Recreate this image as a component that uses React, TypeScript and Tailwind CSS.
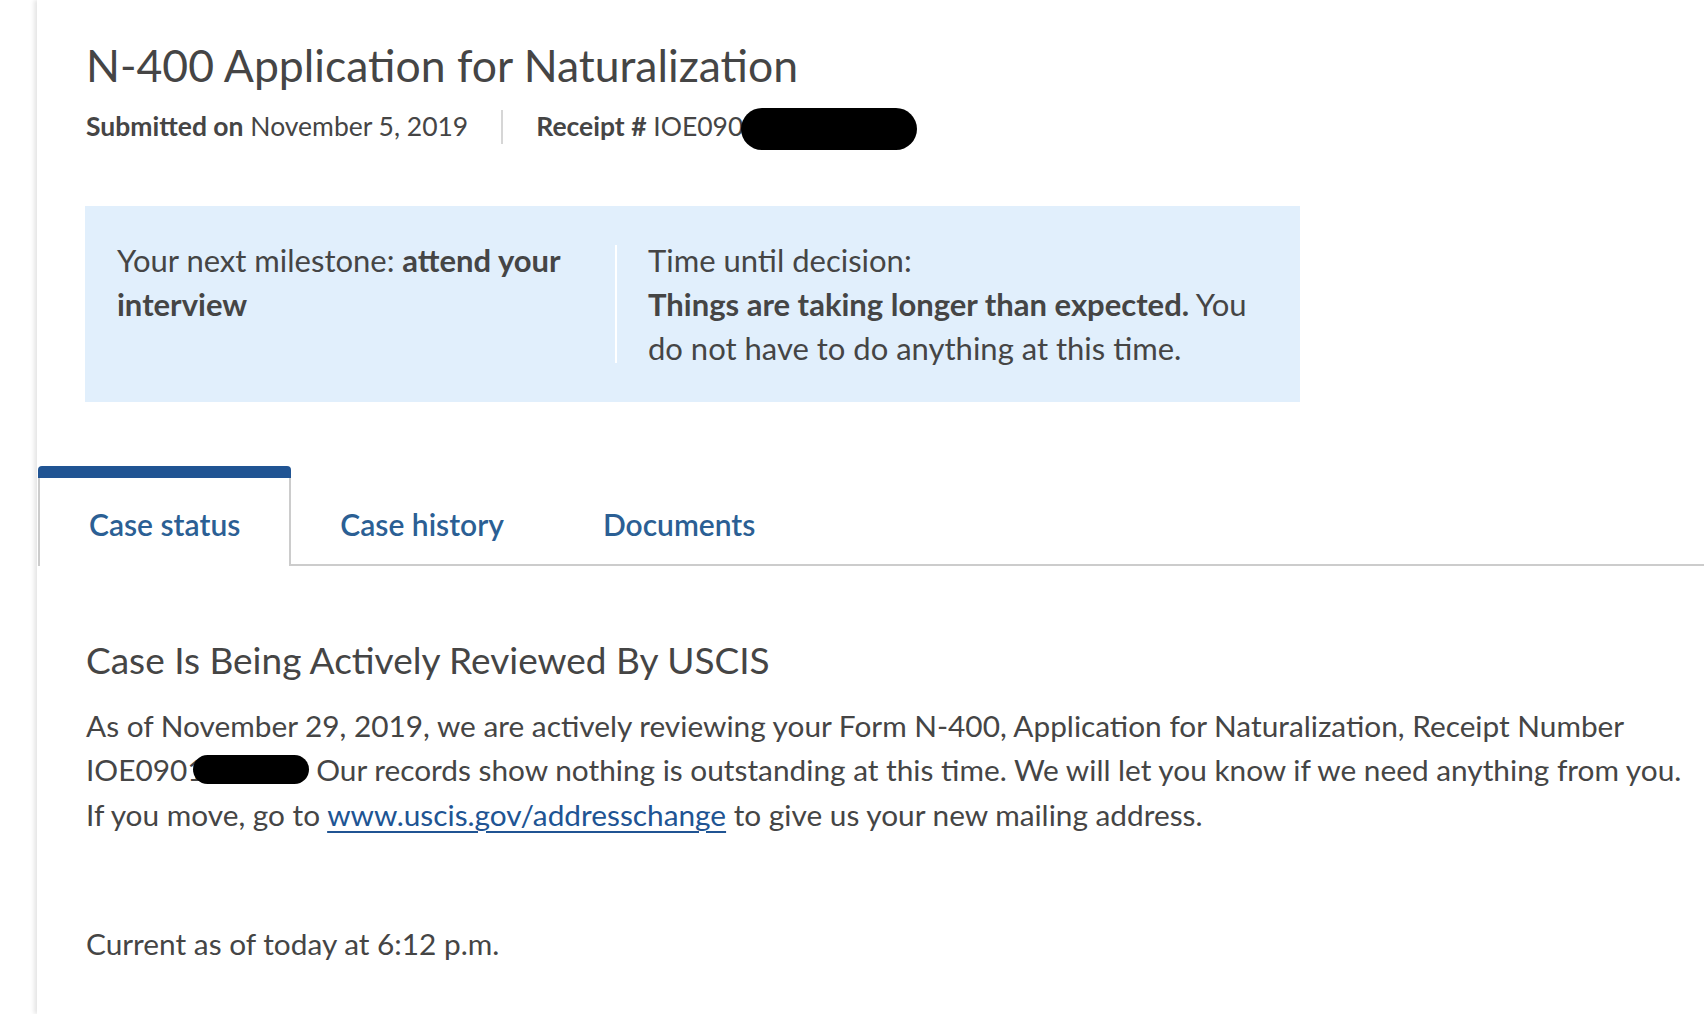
import React from 'react'

const font = { fontFamily: 'Lato, "Open Sans", sans-serif' }

function Redacted({ className }: { className: string }) {
	return <span className={`inline-block rounded-full bg-black ${className}`}></span>
}

export default function App() {
	return (
		<div className="min-h-screen w-full bg-white text-[#454545]" style={font}>
			<div className="ml-[37px] min-h-screen bg-white shadow-[-3px_0_4px_rgba(0,0,0,0.10)]">
				{/* HEADER */}
				<div className="px-[49px] pt-[38px]">
					<h1 className="text-[44.5px] leading-[1.2] font-normal">
						N-400 Application for Naturalization
					</h1>
					<div className="mt-[19px] flex items-stretch text-[26.5px] leading-[1.25] whitespace-nowrap">
						<div className="pr-[33px]">
							<span className="font-bold">Submitted on</span> November 5, 2019
						</div>
						<div className="w-[2px] bg-[#d6d6d6]"></div>
						<div className="pl-[33px]">
							<span className="font-bold">Receipt #</span> IOE090
							<Redacted className="-ml-[2px] -mt-[4px] -mb-[10px] h-[42px] w-[176px] align-[-4px]" />
						</div>
					</div>
				</div>

				{/* MILESTONE BOX */}
				<div className="mt-[62px] ml-[48px] w-[1215px] flex bg-[#e1effc] p-[32px] text-[31px] leading-[44px]">
					<div className="w-[466px] shrink-0 mr-[32px]">
						Your next milestone: <span className="font-bold">attend your interview</span>
					</div>
					<div className="w-[2px] bg-white my-[7px] shrink-0"></div>
					<div className="pl-[31px] flex-1">
						<p>Time until decision:</p>
						<p>
							<span className="font-bold">Things are taking longer than expected.</span> You do not have to do
							anything at this time.
						</p>
					</div>
				</div>

				{/* TABS */}
				<div className="mt-[64px] pl-[1px] flex items-end text-[30px] leading-[44px] font-semibold text-[#2b5f94]">
					<div className="flex flex-col">
						<div className="h-[12px] bg-[#205493] rounded-t-[4px]"></div>
						<div className="border-x-2 border-[#cccccc] px-[49px] pt-[24px] pb-[20px] bg-white">Case status</div>
					</div>
					<div className="border-b-2 border-[#cccccc] px-[49px] pt-[24px] pb-[18px]">Case history</div>
					<div className="border-b-2 border-[#cccccc] px-[50px] pt-[24px] pb-[18px]">Documents</div>
					<div className="flex-1 border-b-2 border-[#cccccc]"></div>
				</div>

				{/* CASE STATUS */}
				<div className="pl-[49px] pt-[72px] pb-[40px]">
					<h2 className="text-[37px] leading-[1.2] font-normal">Case Is Being Actively Reviewed By USCIS</h2>
					<p className="mt-[22px] text-[29.8px] leading-[44.5px] whitespace-nowrap">
						As of November 29, 2019, we are actively reviewing your Form N-400, Application for Naturalization, Receipt Number
						<br />
						IOE0901
						<Redacted className="-ml-[12px] h-[29px] w-[116px] align-[-3px]" /> Our records show nothing is outstanding at
						this time. We will let you know if we need anything from you.
						<br />
						If you move, go to{' '}
						<a href="#" className="text-[#205493] underline underline-offset-[5px] decoration-[2px]">
							www.uscis.gov/addresschange
						</a>{' '}
						to give us your new mailing address.
					</p>
					<p className="mt-[85px] text-[29.8px] leading-[44px]">Current as of today at 6:12 p.m.</p>
				</div>
			</div>
		</div>
	)
}
